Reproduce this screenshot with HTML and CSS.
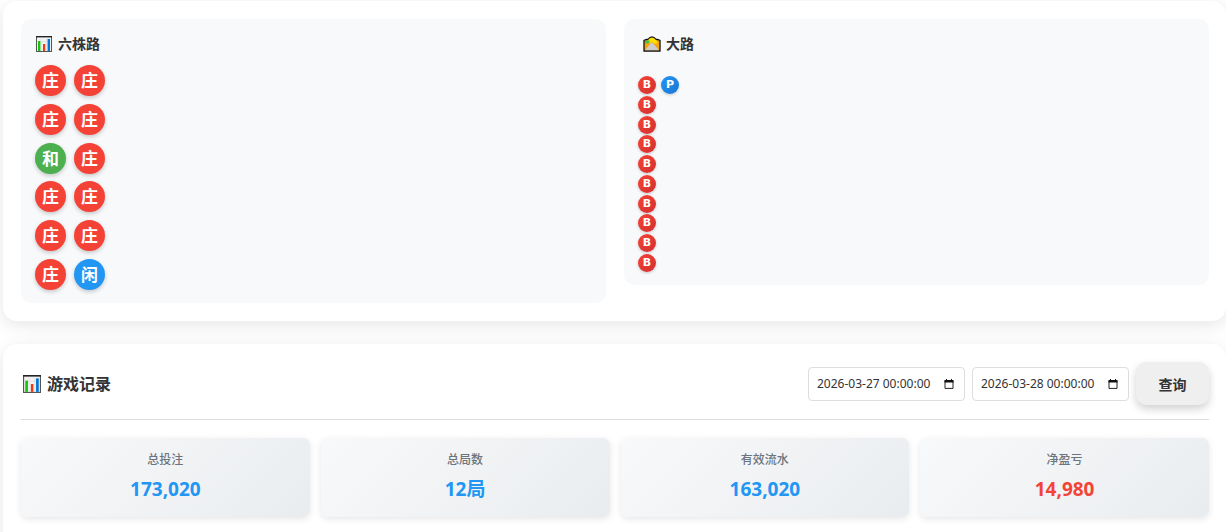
FILE: index.html
```html
<!DOCTYPE html>
<html lang="zh-CN">
<head>
    <meta charset="UTF-8">
    <meta name="viewport" content="width=device-width, initial-scale=1.0">
    <title>游戏记录</title>
    <link rel="stylesheet" href="styles.css">
</head>
<body>
    <svg class="symbols" aria-hidden="true">
        <symbol id="icon-chart" viewBox="0 0 16 16">
            <rect x="0.5" y="0.5" width="15" height="15" fill="#f2f2f2" stroke="#555"/>
            <path d="M0 0.7H16" stroke="#222" stroke-width="1.4"/>
            <path d="M5.5 1.5V15M10.5 1.5V15M1 5.5H15" stroke="#ddd" stroke-width="0.6"/>
            <rect x="2" y="5" width="2.4" height="10" fill="#16c60c"/>
            <rect x="7" y="8" width="2.2" height="7" fill="#f03a17"/>
            <rect x="11.6" y="3" width="2.4" height="12" fill="#0078d7"/>
        </symbol>
        <symbol id="icon-road" viewBox="0 0 18 16">
            <path d="M1 15V4.5L3.5 3.5H5Q9 -1.6 13 3.5H14.5L17 4.5V15Z" fill="#f7a30c" stroke="#111" stroke-width="1.3"/>
            <path d="M4.5 4.5Q9 -1 13.5 4.5L14.5 7.5 11 7.5 9 6 6 7.5Z" fill="#fce100"/>
            <path d="M2 7V5L4 4.5 6.5 4.5V6.5L4 7.5Z" fill="#3fbf5a"/>
            <path d="M2 14.3 8 7H10L16 14.3Z" fill="#ccc"/>
        </symbol>
    </svg>

    <main class="page">
        <section class="card roads">
            <div class="panel">
                <h3 class="panel-title"><svg class="icon"><use href="#icon-chart"/></svg>六株路</h3>
                <div class="bead-road">
                    <ul class="bead-col">
                        <li class="bead banker">庄</li>
                        <li class="bead banker">庄</li>
                        <li class="bead tie">和</li>
                        <li class="bead banker">庄</li>
                        <li class="bead banker">庄</li>
                        <li class="bead banker">庄</li>
                    </ul>
                    <ul class="bead-col">
                        <li class="bead banker">庄</li>
                        <li class="bead banker">庄</li>
                        <li class="bead banker">庄</li>
                        <li class="bead banker">庄</li>
                        <li class="bead banker">庄</li>
                        <li class="bead player">闲</li>
                    </ul>
                </div>
            </div>
            <div class="panel">
                <h3 class="panel-title big-title"><svg class="icon icon-wide"><use href="#icon-road"/></svg>大路</h3>
                <div class="big-road">
                    <ul class="big-col">
                        <li class="dot dot-b">B</li>
                        <li class="dot dot-b">B</li>
                        <li class="dot dot-b">B</li>
                        <li class="dot dot-b">B</li>
                        <li class="dot dot-b">B</li>
                        <li class="dot dot-b">B</li>
                        <li class="dot dot-b">B</li>
                        <li class="dot dot-b">B</li>
                        <li class="dot dot-b">B</li>
                        <li class="dot dot-b">B</li>
                    </ul>
                    <ul class="big-col">
                        <li class="dot dot-p">P</li>
                    </ul>
                </div>
            </div>
        </section>

        <section class="card records">
            <div class="records-head">
                <h2 class="records-title"><svg class="icon icon-large"><use href="#icon-chart"/></svg>游戏记录</h2>
                <form class="filter">
                    <div class="date-box">
                        <input type="text" aria-label="开始时间" value="2026-03-27 00:00:00">
                        <button type="button" class="picker" aria-label="选择开始时间">
                            <svg viewBox="0 0 10 10"><path d="M1 2H9V9.4H1Z" fill="none" stroke="#222"/><path d="M0.5 1H9.5V3.5H0.5ZM2 0H3V1H2ZM7 0H8V1H7Z" fill="#111"/></svg>
                        </button>
                    </div>
                    <div class="date-box">
                        <input type="text" aria-label="结束时间" value="2026-03-28 00:00:00">
                        <button type="button" class="picker" aria-label="选择结束时间">
                            <svg viewBox="0 0 10 10"><path d="M1 2H9V9.4H1Z" fill="none" stroke="#222"/><path d="M0.5 1H9.5V3.5H0.5ZM2 0H3V1H2ZM7 0H8V1H7Z" fill="#111"/></svg>
                        </button>
                    </div>
                    <button type="button" class="btn">查询</button>
                </form>
            </div>
            <div class="stats">
                <div class="stat">
                    <div class="stat-label">总投注</div>
                    <div class="stat-value">173,020</div>
                </div>
                <div class="stat">
                    <div class="stat-label">总局数</div>
                    <div class="stat-value">12局</div>
                </div>
                <div class="stat">
                    <div class="stat-label">有效流水</div>
                    <div class="stat-value">163,020</div>
                </div>
                <div class="stat">
                    <div class="stat-label">净盈亏</div>
                    <div class="stat-value loss">14,980</div>
                </div>
            </div>
        </section>
    </main>
</body>
</html>
```
FILE: styles.css
```css
*{
    margin: 0;
    padding: 0;
    box-sizing: border-box;
}
body{
    background: #fff;
    color: #333;
    font-family: "Noto Sans", "Noto Sans CJK SC", sans-serif;
    font-size: 14px;
    overflow-x: hidden;
}
ul{
    list-style: none;
}
.symbols{
    display: none;
}
.page{
    display: flex;
    flex-direction: column;
    gap: 23px;
    padding: 1px 0 0 3px;
}
.card{
    padding: 18px 17px 18px 18px;
    background: #fff;
    border-radius: 14px;
    box-shadow: 0 4px 18px rgba(0, 0, 0, 0.1);
}

/* 路单 */
.roads{
    display: grid;
    grid-template-columns: 1fr 1fr;
    gap: 18px;
    align-items: start;
}
.panel{
    padding: 14px 14px 13px;
    background: #f8f9fb;
    border-radius: 10px;
}
.panel-title{
    display: flex;
    align-items: center;
    gap: 6px;
    height: 22px;
    margin-bottom: 10px;
    padding-left: 1px;
    font-size: 14px;
    font-weight: bold;
    line-height: 22px;
}
.big-title{
    gap: 5px;
    margin-bottom: 21px;
    padding-left: 5px;
}
.icon{
    width: 16px;
    height: 16px;
    flex: none;
}
.icon-wide{
    width: 18px;
}
.icon-large{
    width: 18px;
    height: 18px;
}
.bead-road{
    display: flex;
    gap: 8px;
}
.bead-col{
    display: flex;
    flex-direction: column;
    justify-content: space-between;
    height: 225px;
}
.bead{
    display: flex;
    align-items: center;
    justify-content: center;
    width: 31px;
    height: 31px;
    border-radius: 50%;
    color: #fff;
    font-size: 17px;
    font-weight: bold;
    line-height: 31px;
    box-shadow: 0 2px 4px rgba(0, 0, 0, 0.2);
}
.banker{
    background: #f44336;
}
.player{
    background: #2196f3;
}
.tie{
    background: #4caf50;
}
.big-road{
    display: flex;
    gap: 5px;
}
.big-col{
    display: flex;
    flex-direction: column;
    justify-content: space-between;
    height: 196px;
}
.dot{
    width: 18px;
    height: 18px;
    border-radius: 50%;
    color: #fff;
    font-family: "DejaVu Sans", sans-serif;
    font-size: 11px;
    font-weight: bold;
    line-height: 18px;
    text-align: center;
    box-shadow: 0 1px 3px rgba(0, 0, 0, 0.2);
}
.dot-b{
    background: linear-gradient(135deg, #f44336, #d32f2f);
}
.dot-p{
    background: linear-gradient(135deg, #2196f3, #1976d2);
}

/* 游戏记录 */
.records{
    padding-bottom: 40px;
}
.records-head{
    display: flex;
    align-items: center;
    justify-content: space-between;
    padding-bottom: 14px;
    border-bottom: 1px solid #ddd;
}
.records-title{
    display: flex;
    align-items: center;
    gap: 6px;
    padding-left: 2px;
    font-size: 16px;
    font-weight: bold;
    line-height: 24px;
}
.filter{
    display: flex;
    align-items: center;
    gap: 7px;
}
.date-box{
    display: flex;
    align-items: center;
    justify-content: space-between;
    width: 157px;
    height: 34px;
    padding: 0 10px 0 8px;
    border: 1px solid #ddd;
    border-radius: 4px;
    background: #fff;
}
.date-box input{
    width: 120px;
    border: 0;
    outline: 0;
    background: none;
    color: #333;
    font-family: inherit;
    font-size: 12px;
}
.picker{
    width: 10px;
    height: 10px;
    border: 0;
    background: none;
}
.picker svg{
    display: block;
    width: 10px;
    height: 10px;
}
.btn{
    width: 73px;
    height: 43px;
    border: 0;
    border-radius: 10px;
    background: #efefef;
    color: #333;
    font-family: inherit;
    font-size: 14px;
    font-weight: bold;
    box-shadow: 0 4px 8px rgba(0, 0, 0, 0.18);
}
.stats{
    display: grid;
    grid-template-columns: repeat(4, 1fr);
    gap: 11px;
    margin-top: 18px;
}
.stat{
    padding: 13px 14px 14px;
    border-radius: 7px;
    background: linear-gradient(135deg, #f8f9fa, #e9ecef);
    text-align: center;
    box-shadow: 0 2px 7px rgba(0, 0, 0, 0.1);
}
.stat-label{
    margin-bottom: 6px;
    color: #6c757d;
    font-size: 12px;
    font-weight: 500;
    line-height: 18px;
}
.stat-value{
    color: #2196f3;
    font-size: 19px;
    font-weight: bold;
    line-height: 28px;
}
.stat-value.loss{
    color: #f44336;
}
```
